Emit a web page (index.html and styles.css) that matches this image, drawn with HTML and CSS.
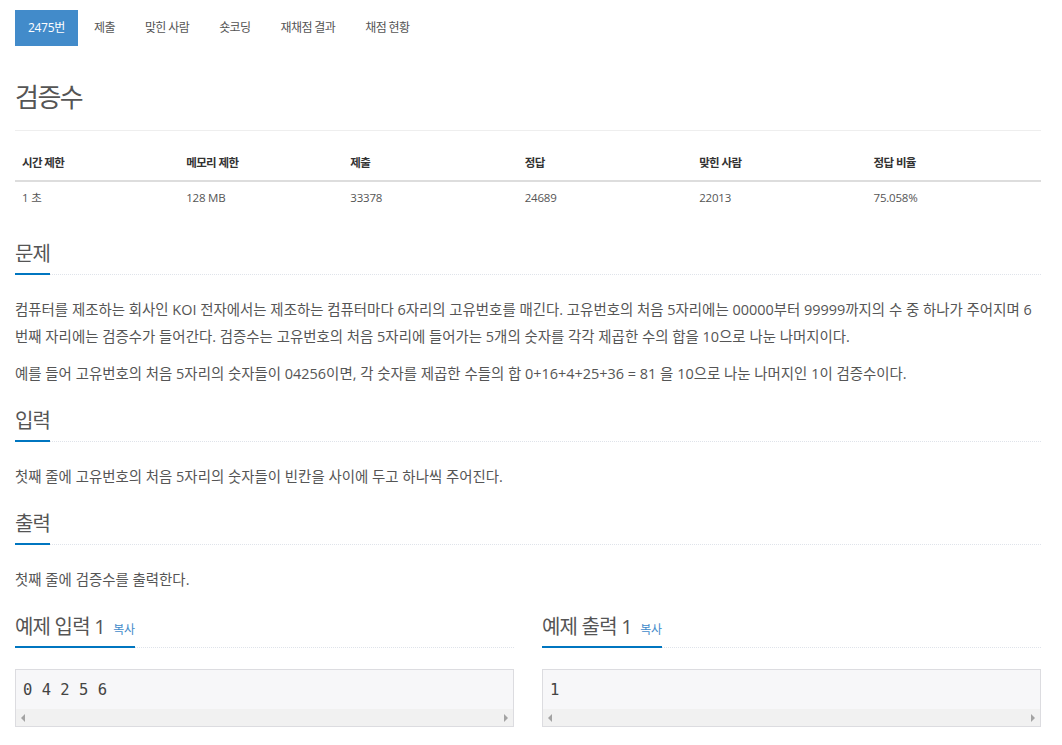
FILE: index.html
```html
<!DOCTYPE html>
<html lang="ko">
<head>
<meta charset="utf-8">
<title>2475번: 검증수</title>
<link rel="stylesheet" href="styles.css">
</head>
<body>
<div class="page">
  <ul class="tabs">
    <li class="tab active">2475번</li>
    <li class="tab">제출</li>
    <li class="tab">맞힌 사람</li>
    <li class="tab">숏코딩</li>
    <li class="tab">재채점 결과</li>
    <li class="tab">채점 현황</li>
  </ul>

  <div class="page-header">
    <h1 class="title">검증수</h1>
  </div>

  <table class="info">
    <thead>
      <tr>
        <th class="c16">시간 제한</th>
        <th class="c16">메모리 제한</th>
        <th class="c17">제출</th>
        <th class="c17">정답</th>
        <th class="c17">맞힌 사람</th>
        <th class="c17">정답 비율</th>
      </tr>
    </thead>
    <tbody>
      <tr>
        <td>1 초</td>
        <td>128 MB</td>
        <td>33378</td>
        <td>24689</td>
        <td>22013</td>
        <td>75.058%</td>
      </tr>
    </tbody>
  </table>

  <section class="section first">
    <div class="headline"><h2>문제</h2></div>
    <p>컴퓨터를 제조하는 회사인 KOI 전자에서는 제조하는 컴퓨터마다 6자리의 고유번호를 매긴다. 고유번호의 처음 5자리에는 00000부터 99999까지의 수 중 하나가 주어지며 6번째 자리에는 검증수가 들어간다. 검증수는 고유번호의 처음 5자리에 들어가는 5개의 숫자를 각각 제곱한 수의 합을 10으로 나눈 나머지이다.</p>
    <p>예를 들어 고유번호의 처음 5자리의 숫자들이 04256이면, 각 숫자를 제곱한 수들의 합 0+16+4+25+36 = 81 을 10으로 나눈 나머지인 1이 검증수이다.</p>
  </section>

  <section class="section">
    <div class="headline"><h2>입력</h2></div>
    <p>첫째 줄에 고유번호의 처음 5자리의 숫자들이 빈칸을 사이에 두고 하나씩 주어진다.</p>
  </section>

  <section class="section">
    <div class="headline"><h2>출력</h2></div>
    <p>첫째 줄에 검증수를 출력한다.</p>
  </section>

  <div class="samples">
    <section class="sample">
      <div class="headline"><h2>예제 입력 1 <span class="copy">복사</span></h2></div>
      <div class="pre-box">
        <pre class="code">0 4 2 5 6</pre>
        <div class="hscroll"><span class="arrow left"></span><span class="arrow right"></span></div>
      </div>
    </section>
    <section class="sample">
      <div class="headline"><h2>예제 출력 1 <span class="copy">복사</span></h2></div>
      <div class="pre-box">
        <pre class="code">1</pre>
        <div class="hscroll"><span class="arrow left"></span><span class="arrow right"></span></div>
      </div>
    </section>
  </div>
</div>
</body>
</html>
```

FILE: styles.css
```css
* { box-sizing: border-box; }

html, body {
  margin: 0;
  padding: 0;
  background: #fff;
}

body {
  font-family: "Open Sans", "Noto Sans CJK KR", sans-serif;
  color: #555;
  font-size: 14px;
}

.page {
  padding: 10px 21px 0 15px;
}

/* tabs */
.tabs {
  list-style: none;
  margin: 0;
  padding: 0;
  display: flex;
  height: 36px;
}
.tab {
  padding: 0 14px;
  font-size: 12px;
  line-height: 36px;
  letter-spacing: -0.6px;
  color: #555;
  margin-right: 2px;
}
.tab.active {
  background: #428bca;
  color: #fff;
  padding: 0 13px;
  letter-spacing: -0.3px;
}

/* title */
.page-header {
  margin-top: 33px;
  padding-bottom: 15px;
  border-bottom: 1px solid #eee;
}
.title {
  margin: 0;
  font-size: 26px;
  line-height: 36px;
  font-weight: 400;
  letter-spacing: -1.5px;
  color: #555;
}

/* info table */
.info {
  width: 100%;
  border-collapse: collapse;
  margin-top: 15px;
  font-size: 11.5px;
}
.c16 { width: 16%; }
.c17 { width: 17%; }
.info th {
  text-align: left;
  font-weight: 700;
  color: #333;
  padding: 8px 7px;
  line-height: 18px;
  letter-spacing: -0.6px;
  border-bottom: 2px solid #ddd;
}
.info td {
  padding: 7px 7px 6px;
  line-height: 18px;
  color: #555;
  letter-spacing: -0.2px;
}

/* sections */
.section { margin-top: 23px; }
.section.first { margin-top: 30px; }

.headline {
  display: flex;
  border-bottom: 1px dotted #dfe3ea;
  margin-bottom: 21px;
}
.headline h2 {
  margin: 0 0 -1px;
  font-size: 20px;
  line-height: 22px;
  height: 32px;
  font-weight: 400;
  letter-spacing: -0.8px;
  color: #555;
  padding-bottom: 8px;
  border-bottom: 2px solid #0076c0;
  white-space: nowrap;
}
.copy {
  font-size: 12px;
  line-height: 1;
  color: #428bca;
  letter-spacing: -0.2px;
  margin-left: 4px;
}

.section p {
  margin: 0 0 10px;
  font-size: 14.45px;
  line-height: 27px;
  color: #555;
}
.section p:last-child { margin-bottom: 0; }

/* samples */
.samples {
  display: grid;
  grid-template-columns: 1fr 1fr;
  column-gap: 28px;
  margin-top: 23px;
}
.sample .headline { margin-bottom: 21px; }
.pre-box {
  border: 1px solid #dcdce0;
  background: #f7f7f9;
}
.code {
  margin: 0;
  padding: 9.5px 7px;
  font-family: "DejaVu Sans Mono", "Liberation Mono", monospace;
  font-size: 15.5px;
  line-height: 20px;
  color: #444;
}
.hscroll {
  height: 17px;
  background: #f1f1f1;
  display: flex;
  justify-content: space-between;
  align-items: center;
  padding: 0 5px;
}
.arrow {
  width: 0;
  height: 0;
  border-top: 4px solid transparent;
  border-bottom: 4px solid transparent;
}
.arrow.left { border-right: 4px solid #a3a3a3; }
.arrow.right { border-left: 4px solid #a3a3a3; }
```
